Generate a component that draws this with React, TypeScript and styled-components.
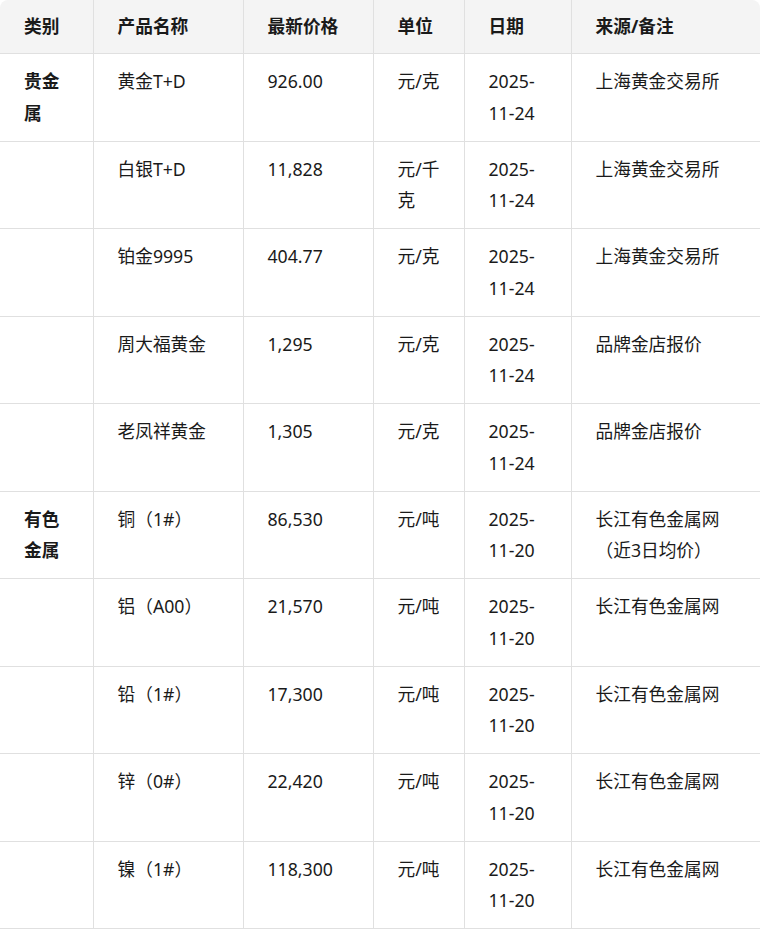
import styled, { createGlobalStyle } from 'styled-components';

const GlobalStyle = createGlobalStyle`
  body {
    margin: 0;
    background: #fff;
    font-family: 'Noto Sans', 'Noto Sans CJK SC', sans-serif;
    color: #1a1a1a;
  }
`;

// 行情数据
const rows = [
  { cat: '贵金属', name: '黄金T+D', price: '926.00', unit: '元/克', date: '2025-11-24', src: '上海黄金交易所' },
  { cat: '', name: '白银T+D', price: '11,828', unit: '元/千克', date: '2025-11-24', src: '上海黄金交易所' },
  { cat: '', name: '铂金9995', price: '404.77', unit: '元/克', date: '2025-11-24', src: '上海黄金交易所' },
  { cat: '', name: '周大福黄金', price: '1,295', unit: '元/克', date: '2025-11-24', src: '品牌金店报价' },
  { cat: '', name: '老凤祥黄金', price: '1,305', unit: '元/克', date: '2025-11-24', src: '品牌金店报价' },
  { cat: '有色金属', name: '铜（1#）', price: '86,530', unit: '元/吨', date: '2025-11-20', src: '长江有色金属网（近3日均价）' },
  { cat: '', name: '铝（A00）', price: '21,570', unit: '元/吨', date: '2025-11-20', src: '长江有色金属网' },
  { cat: '', name: '铅（1#）', price: '17,300', unit: '元/吨', date: '2025-11-20', src: '长江有色金属网' },
  { cat: '', name: '锌（0#）', price: '22,420', unit: '元/吨', date: '2025-11-20', src: '长江有色金属网' },
  { cat: '', name: '镍（1#）', price: '118,300', unit: '元/吨', date: '2025-11-20', src: '长江有色金属网' },
];

const columns = [
  { title: '类别', width: 93 },
  { title: '产品名称', width: 150 },
  { title: '最新价格', width: 130 },
  { title: '单位', width: 91 },
  { title: '日期', width: 107 },
  { title: '来源/备注', width: 189 },
];

const Wrapper = styled.div`
  width: 760px;
  border-radius: 8px 8px 0 0;
  overflow: hidden;
`;

const Table = styled.table`
  width: 760px;
  table-layout: fixed;
  border-collapse: collapse;
  font-size: 17.7px;
  line-height: 31.5px;
`;

const Th = styled.th`
  background: #f4f4f4;
  font-weight: 700;
  text-align: left;
  padding: 11px 24px 10.5px;
  border-bottom: 1px solid #e0e0e0;
  border-right: 1px solid #e0e0e0;
  &:last-child {
    border-right: none;
  }
`;

const Td = styled.td<{ $bold?: boolean }>`
  vertical-align: top;
  padding: 12px 24px 11.5px;
  font-weight: ${(p) => (p.$bold ? 700 : 400)};
  border-bottom: 1px solid #e0e0e0;
  border-right: 1px solid #e0e0e0;
  &:last-child {
    border-right: none;
  }
`;

export default function App() {
  return (
    <>
      <GlobalStyle />
      <Wrapper>
        <Table>
          <colgroup>
            {columns.map((c) => (
              <col key={c.title} style={{ width: c.width }} />
            ))}
          </colgroup>
          <thead>
            <tr>
              {columns.map((c) => (
                <Th key={c.title}>{c.title}</Th>
              ))}
            </tr>
          </thead>
          <tbody>
            {rows.map((r) => (
              <tr key={r.name}>
                <Td $bold>{r.cat}</Td>
                <Td>{r.name}</Td>
                <Td>{r.price}</Td>
                <Td>{r.unit}</Td>
                <Td>{r.date}</Td>
                <Td>{r.src}</Td>
              </tr>
            ))}
          </tbody>
        </Table>
      </Wrapper>
    </>
  );
}
